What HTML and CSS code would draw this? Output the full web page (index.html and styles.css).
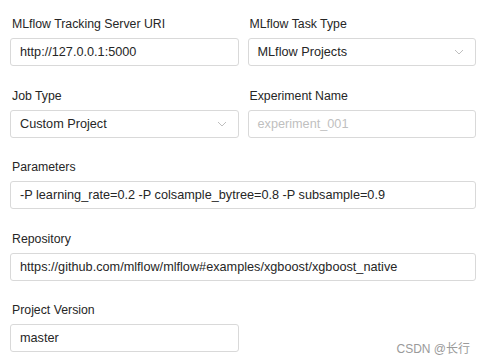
FILE: index.html
```html
<!DOCTYPE html>
<html>
<head>
  <meta charset="UTF-8">
  <title>MLflow Job</title>
  <link rel="stylesheet" href="styles.css">
</head>
<body>
  <form class="job-form">
    <div class="field">
      <label class="field-label">MLflow Tracking Server URI</label>
      <div class="box">http://127.0.0.1:5000</div>
    </div>
    <div class="field">
      <label class="field-label">MLflow Task Type</label>
      <div class="box select">
        <span>MLflow Projects</span>
        <svg class="arrow" width="10" height="6" viewBox="0 0 10 6"><path d="M1 1l4 4 4-4" fill="none" stroke="#bfbfbf" stroke-width="1"/></svg>
      </div>
    </div>
    <div class="field">
      <label class="field-label">Job Type</label>
      <div class="box select">
        <span>Custom Project</span>
        <svg class="arrow" width="10" height="6" viewBox="0 0 10 6"><path d="M1 1l4 4 4-4" fill="none" stroke="#bfbfbf" stroke-width="1"/></svg>
      </div>
    </div>
    <div class="field">
      <label class="field-label">Experiment Name</label>
      <div class="box placeholder">experiment_001</div>
    </div>
    <div class="field wide">
      <label class="field-label">Parameters</label>
      <div class="box">-P learning_rate=0.2 -P colsample_bytree=0.8 -P subsample=0.9</div>
    </div>
    <div class="field wide">
      <label class="field-label">Repository</label>
      <div class="box">https://github.com/mlflow/mlflow#examples/xgboost/xgboost_native</div>
    </div>
    <div class="field">
      <label class="field-label">Project Version</label>
      <div class="box">master</div>
    </div>
  </form>
  <div class="watermark">CSDN @长行</div>
</body>
</html>
```

FILE: styles.css
```css
body {
  margin: 0;
  padding: 0;
  background: #fff;
  font-family: "Liberation Sans", Arial, "Noto Sans CJK SC", sans-serif;
  font-size: 12.7px;
  color: #262626;
}
.job-form {
  display: grid;
  grid-template-columns: 1fr 1fr;
  column-gap: 9px;
  row-gap: 19.5px;
  width: 466px;
  padding: 14px 0 0 10px;
}
.field {
  display: flex;
  flex-direction: column;
}
.field.wide {
  grid-column: 1 / 3;
}
.field-label {
  font-size: 12.3px;
  line-height: 20px;
  margin-bottom: 4px;
  padding-left: 2px;
  color: #262626;
}
.box {
  box-sizing: border-box;
  height: 28px;
  line-height: 26px;
  padding: 0 11px 0 9px;
  border: 1px solid #d9d9d9;
  border-radius: 3px;
  background: #fff;
  white-space: nowrap;
  overflow: hidden;
}
.box.select {
  display: flex;
  justify-content: space-between;
  align-items: center;
}
.placeholder {
  color: #bfbfbf;
}
.arrow {
  display: block;
}
.watermark {
  position: absolute;
  right: 14px;
  bottom: 8px;
  font-size: 12px;
  color: #9a9a9a;
}
```
